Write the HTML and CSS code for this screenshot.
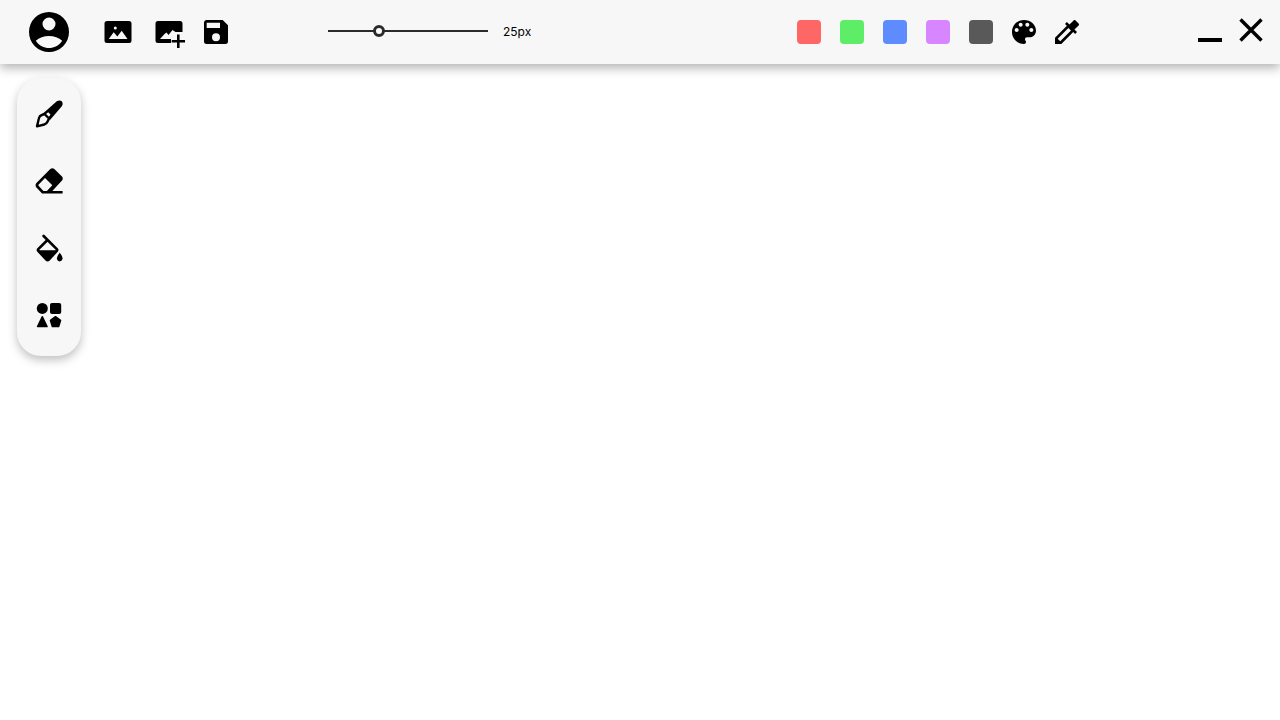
FILE: index.html
```html
<!DOCTYPE html>
<html lang="en">
<head>
<meta charset="utf-8">
<meta name="viewport" content="width=device-width, initial-scale=1">
<title>Paint</title>
<link rel="stylesheet" href="styles.css">
</head>
<body>
<header class="topbar">
  <button class="icon-button account" aria-label="Account">
    <svg width="40" height="40" viewBox="0 0 40 40"><path fill-rule="evenodd" d="M20 0a20 20 0 1 0 0 40a20 20 0 1 0 0-40zM20 5.500a6.500 6.500 0 1 1 0 13a6.500 6.500 0 1 1 0-13zM6.800 28.700C10 25.600 15 24 20 24s10 1.600 13.200 4.700C30 33.500 25 36 20 36S10 33.500 6.800 28.700z"/></svg>
  </button>
  <div class="files">
    <button class="icon-button" aria-label="Open image">
      <svg width="28" height="24" viewBox="0 0 28 24"><path fill-rule="evenodd" d="M3 1h22a2.500 2.500 0 0 1 2.500 2.500v17a2.500 2.500 0 0 1-2.500 2.500H3a2.500 2.500 0 0 1-2.500-2.500v-17A2.500 2.500 0 0 1 3 1zM4.700 19H23.500L17.700 10.800L13.300 16.500L9.700 12.300zM11.300 6.500a1.500 1.500 0 1 0 0 3a1.500 1.500 0 1 0 0-3z"/></svg>
    </button>
    <button class="icon-button add-image" aria-label="Add image">
      <svg width="30" height="28" viewBox="0 0 30 28"><path d="M3 1h22a2.500 2.500 0 0 1 2.500 2.500V12H20.500L17.500 10L13.500 15L11.500 12.500L9.500 14L5 19H16V23H3a2.500 2.500 0 0 1-2.500-2.500v-17A2.500 2.500 0 0 1 3 1z"/><path d="M22 14.600h2.600v5.300H30v2.500h-5.400V28H22v-5.600h-5.300v-2.500H22z"/></svg>
    </button>
    <button class="icon-button" aria-label="Save">
      <svg width="24" height="24" viewBox="3 3 18 18"><path d="M15 9H5V5h10m-3 14a3 3 0 0 1-3-3a3 3 0 0 1 3-3a3 3 0 0 1 3 3a3 3 0 0 1-3 3m5-16H5c-1.110 0-2 .900-2 2v14a2 2 0 0 0 2 2h14a2 2 0 0 0 2-2V7z"/></svg>
    </button>
  </div>
  <div class="size">
    <input class="size-range" id="size" type="range" min="1" max="80" value="25" aria-label="Brush size">
    <label class="size-label" for="size">25px</label>
  </div>
  <div class="colors">
    <button class="swatch red" aria-label="Red"></button>
    <button class="swatch green" aria-label="Green"></button>
    <button class="swatch blue" aria-label="Blue"></button>
    <button class="swatch purple" aria-label="Purple"></button>
    <button class="swatch gray" aria-label="Gray"></button>
    <button class="icon-button" aria-label="Palette">
      <svg width="24" height="24" viewBox="3 3 18 18"><path d="M12 3c-4.970 0-9 4.030-9 9s4.030 9 9 9c.830 0 1.500-.670 1.500-1.500 0-.390-.150-.740-.390-1.010-.230-.260-.380-.610-.380-.990 0-.830.670-1.500 1.500-1.500H16c2.760 0 5-2.240 5-5 0-4.420-4.030-8-9-8zm-5.500 9c-.830 0-1.500-.670-1.500-1.500S5.670 9 6.500 9 8 9.670 8 10.500 7.330 12 6.500 12zm3-4C8.670 8 8 7.330 8 6.500S8.670 5 9.500 5s1.500.670 1.500 1.500S10.330 8 9.500 8zm5 0c-.830 0-1.500-.670-1.500-1.500S13.670 5 14.500 5s1.500.670 1.500 1.500S15.330 8 14.500 8zm3 4c-.830 0-1.500-.670-1.500-1.500S16.670 9 17.500 9s1.500.670 1.500 1.500-.670 1.500-1.500 1.500z"/></svg>
    </button>
    <button class="icon-button" aria-label="Pick color">
      <svg width="24" height="24" viewBox="3 3 18 18"><path d="M20.710 5.630l-2.340-2.340c-.390-.390-1.020-.390-1.410 0l-3.120 3.120-1.930-1.910-1.410 1.410 1.420 1.420L3 16.250V21h4.750l8.920-8.920 1.420 1.420 1.410-1.410-1.920-1.920 3.120-3.120c.400-.400.400-1.030.010-1.420zM6.920 19L5 17.080l8.060-8.060 1.920 1.920L6.920 19z"/></svg>
    </button>
  </div>
  <div class="window-controls">
    <button class="icon-button" aria-label="Minimize">
      <svg width="24" height="24" viewBox="0 0 24 24"><path d="M0 20h24v4H0z"/></svg>
    </button>
    <button class="icon-button" aria-label="Close">
      <svg width="24" height="24" viewBox="0 0 24 24"><path d="M1.500 1.500l21 21M22.500 1.500l-21 21" stroke="#000" stroke-width="3.400"/></svg>
    </button>
  </div>
</header>
<main class="workspace">
  <nav class="tools" aria-label="Tools">
    <button class="icon-button" aria-label="Brush">
      <svg width="28" height="28" viewBox="0 0 28 28"><path d="M2 26.300L4 18Q4.600 15.700 6.800 15L9.500 14L14 18.500L12.600 21.500Q11.500 24 9.300 24.500z" fill="none" stroke="#000" stroke-width="2.400" stroke-linejoin="round"/><path fill-rule="evenodd" d="M8.500 13L21.800 1.200Q24.500-.400 26.800 1.200Q28.500 3.700 26.800 6.300L15 20zM10.700 14.300L13.200 12.200L15.500 14.500L13.600 17.200z"/></svg>
    </button>
    <button class="icon-button" aria-label="Eraser">
      <svg width="28" height="28" viewBox="0 0 28 28"><path fill-rule="evenodd" d="M15.300 2.100Q17.300.400 19.300 2.100L27 9.400Q28.600 11.400 27 13.600L17.300 24H27.600V26.600H7.100L1.200 20.300Q-.100 18.300 1.200 16.200zM10 10.900L3.700 17.500Q3.100 18.300 3.800 19.100L8.400 24H11.900L17.300 18.200z"/></svg>
    </button>
    <button class="icon-button" aria-label="Fill">
      <svg width="28" height="28" viewBox="0 0 28 28"><path d="M8.600 2L21.800 15.200Q22.500 16 21.800 16.900L13.800 25.500Q12.600 26.700 11.400 25.500L3.300 16.900Q2.600 16 3.300 15.200L12.500 6" fill="none" stroke="#000" stroke-width="2.600" stroke-linecap="round"/><path d="M3 16.300H22L13.500 26H11.500zM24.700 18.800Q28.200 22.800 27.500 25Q26.800 27.400 24.700 27.400Q22.500 27.400 21.900 25Q21.400 22.800 24.700 18.800z"/></svg>
    </button>
    <button class="icon-button" aria-label="Shapes">
      <svg width="28" height="28" viewBox="0 0 28 28"><circle cx="7.300" cy="7.400" r="5.500"/><rect x="15" y="1.900" width="11.200" height="11" rx="2"/><path d="M7.300 15.800L12 25.500H2.600zM20.500 15.700L25.500 19.400L23.600 25.500H17.400L15.500 19.400z" stroke="#000" stroke-width="1.600" stroke-linejoin="round"/></svg>
    </button>
  </nav>
  <canvas class="canvas" aria-label="Drawing canvas"></canvas>
</main>
</body>
</html>
```
FILE: styles.css
```css
* {
  box-sizing: border-box;
}

body {
  margin: 0;
  min-height: 100vh;
  display: flex;
  flex-direction: column;
  background: #fff;
  color: #000;
  font-family: Inter, sans-serif;
}

button {
  border: 0;
  padding: 0;
  margin: 0;
  cursor: pointer;
}

.topbar {
  display: flex;
  align-items: center;
  height: 64px;
  padding: 0 17px 0 29px;
  background: #f7f7f7;
  box-shadow: 0 4px 10px rgba(0, 0, 0, 0.3);
}

.icon-button {
  display: block;
  background: none;
}

.icon-button svg {
  display: block;
}

.account {
  margin-right: 35px;
}

.files {
  display: flex;
  align-items: flex-start;
  height: 24px;
}

.add-image {
  margin: 0 19px 0 23px;
}

.size {
  display: flex;
  align-items: center;
  gap: 15px;
  margin-left: 100px;
}

.size-range {
  appearance: none;
  width: 160px;
  height: 12px;
  margin: 0 0 2px;
  background: linear-gradient(#2b2b2b, #2b2b2b) center / 100% 2px no-repeat;
}

.size-range::-webkit-slider-thumb {
  appearance: none;
  width: 12px;
  height: 12px;
  border: 3px solid #2b2b2b;
  border-radius: 50%;
  background: #fff;
}

.size-label {
  font-size: 12px;
  line-height: 16px;
}

.colors {
  display: flex;
  align-items: center;
  gap: 19px;
  margin-left: auto;
  margin-right: 119px;
}

.swatch {
  width: 24px;
  height: 24px;
  border-radius: 4px;
}

.red {
  background: #ff6666;
}

.green {
  background: #5eed66;
}

.blue {
  background: #5e8cff;
}

.purple {
  background: #d886ff;
}

.gray {
  background: #595959;
}

.window-controls {
  display: flex;
  gap: 17px;
  margin-bottom: 4px;
}

.workspace {
  flex: 1;
  display: flex;
  align-items: flex-start;
  padding: 14px 17px;
}

.tools {
  display: flex;
  flex-direction: column;
  align-items: center;
  gap: 39px;
  width: 64px;
  padding: 22px 0 27px;
  border-radius: 24px;
  background: #f7f7f7;
  box-shadow: 0 4px 10px rgba(0, 0, 0, 0.25);
}

.canvas {
  flex: 1;
  min-width: 0;
  align-self: stretch;
}
```
